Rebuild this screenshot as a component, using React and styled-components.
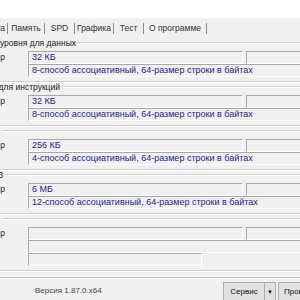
import React from 'react';
import styled, { createGlobalStyle } from 'styled-components';

const GlobalStyle = createGlobalStyle`
  html, body {
    margin: 0;
    padding: 0;
    background: #f0f0f0;
  }
  body {
    font-family: "Liberation Sans", "DejaVu Sans", sans-serif;
  }
  #root {
    width: 300px;
    height: 300px;
    overflow: hidden;
  }
`;

const Window = styled.div`
  width: 300px;
  height: 300px;
  display: flex;
  flex-direction: column;
  background: #f0f0f0;
  overflow: hidden;
  font-size: 8.5px;
  color: #222;
`;

const TopStrip = styled.div`
  height: 18px;
  flex-shrink: 0;
  background: #fff;
`;

const TabBar = styled.div`
  height: 18px;
  flex-shrink: 0;
  display: flex;
  align-items: center;
`;

const Tab = styled.div`
  flex: 0 0 ${p => p.$w}px;
  box-sizing: border-box;
  height: 11px;
  line-height: 11px;
  margin-top: 2px;
  display: flex;
  justify-content: ${p => (p.$clip ? 'flex-end' : 'center')};
  padding-right: ${p => (p.$clip ? 2 : 0)}px;
  overflow: hidden;
  white-space: nowrap;
  color: #333;
  border-right: 1px solid #8c8c8c;
`;

const Pane = styled.div`
  height: 242px;
  flex-shrink: 0;
  box-sizing: border-box;
  padding-top: 2px;
  border-bottom: 1px solid #c6c6c6;
  box-shadow: 0 1px 0 #fff;
  overflow: hidden;
`;

const Group = styled.section`
  margin-right: -30px;
  padding-bottom: 4px;
  border-bottom: 1px solid #d0d0d0;
  box-shadow: 0 1px 0 #fff;
`;

const GroupHead = styled.div`
  height: 10px;
  display: flex;
  align-items: center;
  margin-bottom: 3px;
`;

const Legend = styled.div`
  flex: 0 0 ${p => p.$w}px;
  display: flex;
  justify-content: flex-end;
  overflow: hidden;
  white-space: nowrap;
  padding-right: 2px;
  color: #1a1a1a;
`;

const HeadLine = styled.div`
  flex: 1;
  border-top: 1px solid #d0d0d0;
  border-bottom: 1px solid #fff;
`;

const Row = styled.div`
  height: 13px;
  display: flex;
`;

const RowLabel = styled.div`
  flex: 0 0 5px;
  margin-right: 23px;
  display: flex;
  justify-content: flex-end;
  overflow: hidden;
  white-space: nowrap;
  line-height: 13px;
  color: #222;
`;

const Field = styled.div`
  flex: ${p => (p.$w ? `0 0 ${p.$w}px` : '1')};
  box-sizing: border-box;
  height: 13px;
  margin-left: ${p => p.$gap || 0}px;
  padding-left: 3px;
  line-height: 11px;
  font-size: 9px;
  white-space: nowrap;
  overflow: hidden;
  color: #25258c;
  background: #f0f0f0;
  border-top: 1px solid #a8a8a8;
  border-left: 1px solid #a8a8a8;
  border-bottom: 1px solid #fff;
  border-right: 1px solid #fff;
`;

const Footer = styled.div`
  flex: 1;
  display: flex;
  align-items: flex-start;
  padding-top: 4px;
  font-size: 8px;
`;

const Version = styled.div`
  flex: 0 0 223px;
  box-sizing: border-box;
  padding-left: 35px;
  padding-top: 4px;
  color: #444;
  white-space: nowrap;
`;

const Button = styled.div`
  flex: 0 0 ${p => p.$w}px;
  box-sizing: border-box;
  height: 19px;
  margin-right: 2px;
  display: flex;
  align-items: stretch;
  background: #e1e1e1;
  border: 1px solid #adadad;
  color: #111;
  white-space: nowrap;
  overflow: hidden;
`;

const ButtonText = styled.span`
  flex: 1;
  display: flex;
  align-items: center;
  justify-content: ${p => (p.$left ? 'flex-start' : 'center')};
  padding-left: ${p => (p.$left ? 5 : 0)}px;
`;

const ButtonArrow = styled.span`
  flex: 0 0 10px;
  display: flex;
  align-items: center;
  justify-content: center;
  border-left: 1px solid #adadad;
  font-size: 6px;
`;

const sizeLabel = 'Размер';

const caches = [
  { title: 'Кэш L1 уровня для данных', w: 76, size: '32 КБ', desc: '8-способ ассоциативный, 64-размер строки в байтах' },
  { title: 'Кэш L1 для инструкций', w: 60, size: '32 КБ', desc: '8-способ ассоциативный, 64-размер строки в байтах' },
  { title: 'Кэш L2', w: 0, size: '256 КБ', desc: '4-способ ассоциативный, 64-размер строки в байтах' },
  { title: 'Кэш L3', w: 3, size: '6 МБ', desc: '12-способ ассоциативный, 64-размер строки в байтах' },
];

const tabs = [
  { name: 'Плата', w: 8, clip: true },
  { name: 'Память', w: 37 },
  { name: 'SPD', w: 30 },
  { name: 'Графика', w: 39 },
  { name: 'Тест', w: 30 },
  { name: 'О программе', w: 63 },
];

export default function App() {
  return (
    <>
      <GlobalStyle />
      <Window>
        <TopStrip />
        <TabBar>
          {tabs.map(t => (
            <Tab key={t.name} $w={t.w} $clip={t.clip}>{t.name}</Tab>
          ))}
        </TabBar>

        <Pane>
          {caches.map(c => (
            <Group key={c.title}>
              <GroupHead>
                <Legend $w={c.w}>{c.title}</Legend>
                <HeadLine />
              </GroupHead>
              <Row>
                <RowLabel>{sizeLabel}</RowLabel>
                <Field $w={215}>{c.size}</Field>
                <Field $w={80} $gap={3} />
              </Row>
              <Row>
                <RowLabel />
                <Field>{c.desc}</Field>
              </Row>
            </Group>
          ))}

          <Group>
            <GroupHead>
              <Legend $w={0} />
              <HeadLine />
            </GroupHead>
            <Row>
              <RowLabel>{sizeLabel}</RowLabel>
              <Field $w={215} />
              <Field $w={80} $gap={3} />
            </Row>
            <Row>
              <RowLabel />
              <Field />
            </Row>
            <Row>
              <RowLabel />
              <Field $w={174} />
            </Row>
          </Group>
        </Pane>

        <Footer>
          <Version>Версия 1.87.0.x64</Version>
          <Button $w={53}>
            <ButtonText>Сервис</ButtonText>
            <ButtonArrow>▼</ButtonArrow>
          </Button>
          <Button $w={70}>
            <ButtonText $left>Проверка</ButtonText>
          </Button>
        </Footer>
      </Window>
    </>
  );
}
